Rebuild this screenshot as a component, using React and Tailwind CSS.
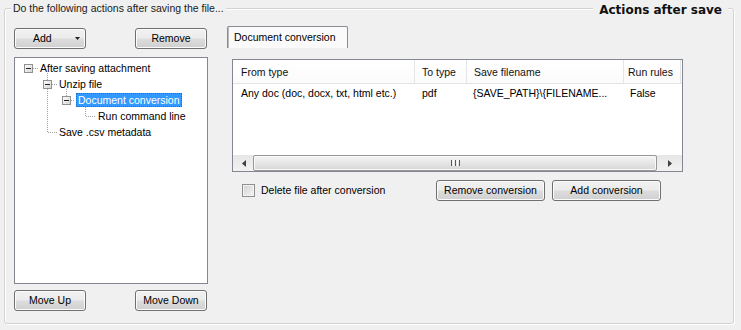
import React from "react";

function Btn({ children, className = "" }) {
  return (
    <div
      className={`h-[21px] flex items-center rounded-[3px] border border-[#707070] bg-[linear-gradient(#f2f2f2_0%,#ebebeb_48%,#dddddd_52%,#cfcfcf_100%)] shadow-[inset_0_0_0_1px_#fbfbfb] text-black ${className}`}
    >
      {children}
    </div>
  );
}

function TreeLines() {
  const dot = { stroke: "#a0a0a0", strokeDasharray: "1 1", shapeRendering: "crispEdges" };
  const Box = ({ x, y }) => (
    <g>
      <rect x={x + 0.5} y={y + 0.5} width="8" height="8" fill="url(#exg)" stroke="#919191" shapeRendering="crispEdges" />
      <line x1={x + 2} x2={x + 7} y1={y + 4.5} y2={y + 4.5} stroke="#222" shapeRendering="crispEdges" />
    </g>
  );
  return (
    <svg className="absolute left-0 top-0" width="120" height="90">
      <defs>
        <linearGradient id="exg" x1="0" y1="0" x2="1" y2="1">
          <stop offset="0" stopColor="#ffffff" />
          <stop offset="1" stopColor="#d4d4d4" />
        </linearGradient>
      </defs>
      <line x1="18" x2="23" y1="10.5" y2="10.5" {...dot} />
      <line x1="32.5" x2="32.5" y1="15" y2="75" {...dot} />
      <line x1="37" x2="42" y1="26.5" y2="26.5" {...dot} />
      <line x1="33" x2="42" y1="74.5" y2="74.5" {...dot} />
      <line x1="51.5" x2="51.5" y1="31" y2="38" {...dot} />
      <line x1="56" x2="60" y1="42.5" y2="42.5" {...dot} />
      <line x1="70.5" x2="70.5" y1="47" y2="59" {...dot} />
      <line x1="71" x2="80" y1="58.5" y2="58.5" {...dot} />
      <Box x={9} y={6} />
      <Box x={28} y={22} />
      <Box x={47} y={38} />
    </svg>
  );
}

function Arrow({ dir }) {
  return (
    <svg width="4" height="7" viewBox="0 0 4 7">
      {dir === "left" ? <polygon points="4,0 4,7 0,3.5" fill="#404040" /> : <polygon points="0,0 0,7 4,3.5" fill="#404040" />}
    </svg>
  );
}

export default function App() {
  return (
    <div className="w-[741px] h-[330px] bg-[#f0f0f0] pt-[8px] pl-[4px] font-['Liberation_Sans',Arial,sans-serif] text-[10.5px] leading-[13px] text-black overflow-hidden">
      <div className="relative w-[730px] h-[316px] border border-[#d3d3d3] rounded-[3px] shadow-[inset_1px_1px_0_#ffffff,1px_1px_0_#ffffff] flex">
        <div className="absolute left-[6px] top-[-7px] px-[2px] bg-[#f0f0f0] text-[#1a1a1a]">
          Do the following actions after saving the file...
        </div>
        <div className="absolute right-[5px] top-[-7px] px-[6px] bg-[#f0f0f0] font-['DejaVu_Sans',Verdana,sans-serif] font-bold text-[12px] leading-[16px] text-[#111]">
          Actions after save
        </div>

        <div className="ml-[9px] mt-[19px] w-[194px] flex flex-col">
          <div className="flex justify-between pr-[1px]">
            <Btn className="w-[72px] pl-[18px] pr-[5px] justify-between">
              <span>Add</span>
              <svg width="5" height="3" viewBox="0 0 5 3">
                <polygon points="0,0 5,0 2.5,3" fill="#222" />
              </svg>
            </Btn>
            <Btn className="w-[72px] justify-center">Remove</Btn>
          </div>
          <div className="mt-[8px] h-[227px] border border-[#828790] bg-white relative pt-[2px]">
            <TreeLines />
            <div className="h-[16px] leading-[16px] pl-[23px]">
              <span className="px-[2px]">After saving attachment</span>
            </div>
            <div className="h-[16px] leading-[16px] pl-[42px]">
              <span className="px-[2px]">Unzip file</span>
            </div>
            <div className="h-[16px] flex items-center pl-[61px]">
              <span className="px-[2px] h-[14px] leading-[14px] bg-[#3399ff] text-white outline outline-1 outline-dotted outline-[#1f6fcf] -outline-offset-1">
                Document conversion
              </span>
            </div>
            <div className="h-[16px] leading-[16px] pl-[81px]">
              <span className="px-[2px]">Run command line</span>
            </div>
            <div className="h-[16px] leading-[16px] pl-[42px]">
              <span className="px-[2px]">Save .csv metadata</span>
            </div>
          </div>
          <div className="mt-[6px] flex justify-between pr-[1px]">
            <Btn className="w-[72px] justify-center">Move Up</Btn>
            <Btn className="w-[72px] justify-center">Move Down</Btn>
          </div>
        </div>

        <div className="ml-[19px] mt-[17px] flex flex-col">
          <div className="w-[121px] h-[22px] border border-b-0 border-[#898c95] rounded-t-[2px] bg-[#fafafa] shadow-[inset_1px_0_0_#b8b8b8] flex items-center pl-[6px]">
            Document conversion
          </div>
          <div className="ml-[5px] mt-[11px] w-[451px] h-[113px] border border-[#828790] bg-white flex flex-col">
            <div className="h-[24px] flex border-b border-[#e3e3e3] bg-[linear-gradient(#ffffff,#fbfbfb)] text-[#111]">
              <div className="w-[182px] border-r border-[#e3e5e8] pl-[8px] pt-[2px] flex items-center">From type</div>
              <div className="w-[52px] border-r border-[#e3e5e8] pl-[7px] pt-[2px] flex items-center">To type</div>
              <div className="w-[157px] border-r border-[#e3e5e8] pl-[7px] pt-[2px] flex items-center">Save filename</div>
              <div className="w-[57px] border-r border-[#e3e5e8] pl-[4px] pt-[2px] flex items-center">Run rules</div>
            </div>
            <div className="h-[17px] flex items-center pt-[2px]">
              <div className="w-[182px] pl-[8px] whitespace-nowrap">Any doc (doc, docx, txt, html etc.)</div>
              <div className="w-[52px] pl-[7px]">pdf</div>
              <div className="w-[157px] pl-[6px] whitespace-nowrap">{"{SAVE_PATH}\\{FILENAME..."}</div>
              <div className="w-[57px] pl-[6px]">False</div>
            </div>
            <div className="flex-1" />
            <div className="h-[16px] flex bg-[linear-gradient(#e6e6e6,#f2f2f2)]">
              <div className="w-[20px] flex items-center justify-center pl-[2px]">
                <Arrow dir="left" />
              </div>
              <div className="w-[404px] rounded-[2px] border border-[#979797] bg-[linear-gradient(#f6f6f6,#e6e6e6_50%,#d6d6d6)] shadow-[inset_0_0_0_1px_#fafafa] flex items-center justify-center gap-[1px]">
                <div className="w-[1px] h-[6px] bg-[#5a5a5a]" />
                <div className="w-[1px] h-[6px] bg-[#ffffff]" />
                <div className="w-[1px] h-[6px] bg-[#5a5a5a]" />
                <div className="w-[1px] h-[6px] bg-[#ffffff]" />
                <div className="w-[1px] h-[6px] bg-[#5a5a5a]" />
              </div>
              <div className="flex-1 flex items-center justify-center">
                <Arrow dir="right" />
              </div>
            </div>
          </div>
          <div className="mt-[8px] flex items-center pl-[15px]">
            <div className="w-[194px] flex items-center">
              <div className="w-[13px] h-[13px] border border-[#8e8f8f] bg-[linear-gradient(135deg,#cfcfcf,#f7f7f7)] shadow-[inset_0_0_0_1px_#f4f4f4]" />
              <span className="ml-[6px]">Delete file after conversion</span>
            </div>
            <Btn className="w-[109px] justify-center">Remove conversion</Btn>
            <Btn className="ml-[7px] w-[109px] justify-center">Add conversion</Btn>
          </div>
        </div>
      </div>
    </div>
  );
}
